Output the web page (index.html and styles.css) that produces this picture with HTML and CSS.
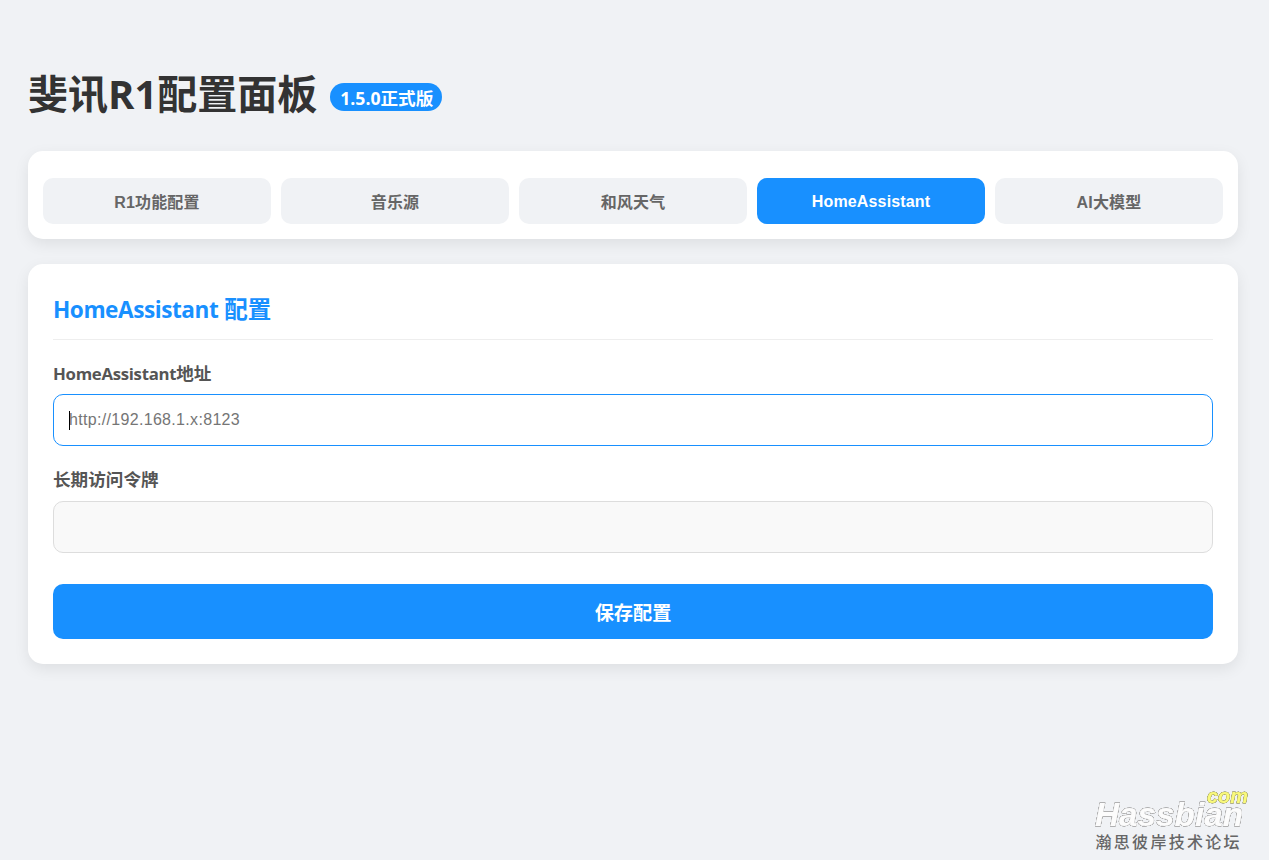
FILE: index.html
```
<!DOCTYPE html>
<html lang="zh-CN">
  <head>
    <meta charset="UTF-8" />
    <meta name="viewport" content="width=device-width, initial-scale=1.0" />
    <title>斐讯R1配置面板</title>

    <link rel="stylesheet" href="styles.css">
  </head>
  <body>
    <div class="container">
      <header class="header">
        <h1>斐讯R1配置面板</h1>
        <span class="version">1.5.0正式版</span>
      </header>

      <div class="tabs">
        <button class="tab">R1功能配置</button>
        <button class="tab">音乐源</button>
        <button class="tab">和风天气</button>
        <button class="tab active">HomeAssistant</button>
        <button class="tab">AI大模型</button>
      </div>

      <div class="card">
        <h2><span class="latin">HomeAssistant</span> 配置</h2>
        <div class="form-group">
          <label class="mixed" for="ha-url"><span class="latin">HomeAssistant</span>地址</label>
          <div class="field">
            <input class="focused" type="text" id="ha-url" placeholder="http://192.168.1.x:8123" />
            <span class="caret"></span>
          </div>
        </div>
        <div class="form-group">
          <label for="ha-token">长期访问令牌</label>
          <div class="field">
            <input type="text" id="ha-token" />
          </div>
        </div>
        <button class="save">保存配置</button>
      </div>
    </div>

    <!-- forum watermark -->
    <svg class="watermark" width="164" height="74" viewBox="0 0 164 74">
      <text class="wm-name" x="4" y="39.5" textLength="148" lengthAdjust="spacingAndGlyphs">Hassbian</text>
      <text class="wm-com" x="116" y="17" textLength="41" lengthAdjust="spacingAndGlyphs">com</text>
      <text class="wm-forum" x="4.5" y="62">瀚思彼岸技术论坛</text>
    </svg>
  </body>
</html>
```

FILE: styles.css
```
* {
  box-sizing: border-box;
}

body {
  margin: 0;
  height: 860px;
  overflow: hidden;
  background-color: #f0f2f5;
  color: #333333;
  font-family: "Open Sans", "Noto Sans CJK SC", sans-serif;
}

.container {
  width: 1210px;
  margin-left: 28px;
  padding-top: 65px;
}

.header {
  display: flex;
  align-items: center;
  height: 60px;
  margin-bottom: 26px;
}

h1 {
  margin: 0;
  font-size: 40px;
  line-height: 58px;
  padding-bottom: 2px;
}

.version {
  height: 28px;
  margin: 4px 0 0 13px;
  padding: 0 9px 0 10px;
  border-radius: 20px;
  background-color: #1890ff;
  color: #ffffff;
  font-size: 17.6px;
  font-weight: bold;
  line-height: 30px;
}

.tabs {
  display: flex;
  gap: 10px;
  height: 88px;
  margin-bottom: 25px;
  padding: 27px 15px 15px;
  border-radius: 15px;
  background-color: #ffffff;
  box-shadow: 0 5px 15px rgba(0, 0, 0, 0.08);
}

.tab {
  flex: 1;
  padding: 0;
  border: none;
  border-radius: 10px;
  background-color: #f0f2f5;
  color: #666666;
  font-family: "Liberation Sans", "Noto Sans CJK SC", sans-serif;
  font-size: 16px;
  font-weight: bold;
  letter-spacing: 0.15px;
}

.tab.active {
  padding-top: 2px;
  background-color: #1890ff;
  color: #ffffff;
}

.card {
  height: 400px;
  padding: 25px;
  border-radius: 15px;
  background-color: #ffffff;
  box-shadow: 0 5px 15px rgba(0, 0, 0, 0.08);
}

h2 {
  height: 51px;
  margin: 0 0 20px;
  border-bottom: 1px solid #eeeeee;
  color: #1890ff;
  font-size: 23.5px;
  line-height: 41px;
}

h2 .latin {
  font-size: 22.6px;
  letter-spacing: -0.45px;
}

.form-group {
  margin-bottom: 21px;
}

label {
  display: block;
  height: 34px;
  color: #555555;
  font-size: 17.6px;
  font-weight: bold;
  line-height: 25px;
}

label.mixed {
  line-height: 27px;
}

label .latin {
  font-size: 16.8px;
  letter-spacing: -0.3px;
}

.field {
  position: relative;
  height: 52px;
}

input {
  width: 100%;
  height: 52px;
  padding: 0 15px;
  border: 1px solid #dddddd;
  border-radius: 10px;
  outline: none;
  background-color: #f9f9f9;
  font-family: "Liberation Sans", sans-serif;
  font-size: 16px;
  letter-spacing: 0.32px;
}

input.focused {
  border-color: #1890ff;
  background-color: #ffffff;
}

.caret {
  position: absolute;
  top: 17px;
  left: 16px;
  width: 1px;
  height: 19px;
  background-color: #000000;
}

.save {
  width: 100%;
  height: 55px;
  margin-top: 10px;
  border: none;
  border-radius: 10px;
  background-color: #1890ff;
  color: #ffffff;
  font-family: "Liberation Sans", "Noto Sans CJK SC", sans-serif;
  font-size: 19.2px;
  font-weight: bold;
}

.watermark {
  position: absolute;
  top: 786px;
  left: 1091px;
}

.wm-name,
.wm-com {
  font-family: "Liberation Sans", sans-serif;
  font-style: italic;
  font-weight: bold;
  filter: drop-shadow(0 0 0.6px #444444) drop-shadow(0 0 0.4px #777777);
}

.wm-name {
  fill: #fcfcfc;
  stroke: #fcfcfc;
  stroke-width: 0.7px;
  font-size: 34px;
}

.wm-com {
  fill: #f9f97c;
  stroke: #f9f97c;
  stroke-width: 0.5px;
  font-size: 20px;
}

.wm-forum {
  fill: #666666;
  font-family: "Noto Sans CJK SC", sans-serif;
  font-size: 16px;
  font-weight: 500;
  letter-spacing: 2.3px;
}
```
